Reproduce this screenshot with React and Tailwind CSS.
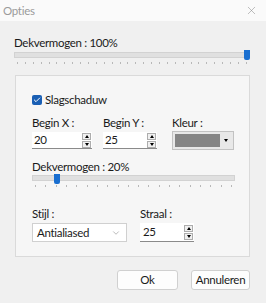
import { Check, ChevronDown, X } from "lucide-react";

function Spin() {
  return (
    <div className="flex flex-col gap-[1px]">
      <div className="w-[9px] h-[7px] border border-[#adadad] bg-[#f0f0f0] flex items-center justify-center">
        <div className="w-0 h-0 border-l-[2.5px] border-r-[2.5px] border-b-[3px] border-l-transparent border-r-transparent border-b-black" />
      </div>
      <div className="w-[9px] h-[7px] border border-[#adadad] bg-[#f0f0f0] flex items-center justify-center">
        <div className="w-0 h-0 border-l-[2.5px] border-r-[2.5px] border-t-[3px] border-l-transparent border-r-transparent border-t-black" />
      </div>
    </div>
  );
}

function NumField({ value, width }) {
  return (
    <div className={`flex items-center justify-between bg-white border-b border-[#8a8a8a] h-[17px] pl-[2px] pr-[1px] ${width}`}>
      <span>{value}</span>
      <Spin />
    </div>
  );
}

function Ticks({ count }) {
  const ticks = [];
  for (let i = 0; i < count; i++) ticks.push(i);
  return (
    <div className="flex justify-between px-[3px] mt-[4px]">
      {ticks.map((t) => (
        <div key={t} className="w-px h-[2px] bg-[#b8b8b8]" />
      ))}
    </div>
  );
}

export default function App() {
  return (
    <div
      className="w-[266px] h-[303px] bg-[#f0f0f0] text-[11.5px] tracking-[-0.3px] text-[#1a1a1a] flex flex-col"
      style={{ fontFamily: "Lato, 'Noto Sans', sans-serif" }}
    >
      <div className="h-[21px] bg-[#fafafa] flex items-center justify-between pl-[3px] pr-[8px]">
        <span className="text-[#9a9a9a]">Opties</span>
        <X size={13} strokeWidth={1} className="text-[#8a8a8a]" />
      </div>

      <div className="pl-[14px] pr-[16px] pt-[15px] flex flex-col flex-1">
        <div className="leading-[14px]">Dekvermogen : 100%</div>
        <div className="relative mt-[1px]">
          <div className="h-[6px] bg-[#e0e0e0] border border-[#d2d2d2] mt-[1px]" />
          <div className="absolute right-0 top-[-1px] w-[6px] h-[10px] bg-[#1a6fd0] rounded-b-[2px]" />
        </div>
        <Ticks count={30} />

        <div className="mt-[11px] border border-[#dadada] bg-[#f6f6f6] ml-[1px] h-[182px] pl-[16px] pr-[14px] pt-[19px]">
          <div className="flex items-center gap-[3px] h-[10px]">
            <div className="w-[10px] h-[10px] bg-[#1a5fb4] rounded-[2px] flex items-center justify-center">
              <Check size={8} strokeWidth={3} className="text-white" />
            </div>
            <span>Slagschaduw</span>
          </div>

          <div className="flex mt-[11px] gap-[11px]">
            <div className="flex flex-col">
              <span className="leading-[14px]">Begin X :</span>
              <div className="mt-[2px]">
                <NumField value="20" width="w-[60px]" />
              </div>
            </div>
            <div className="flex flex-col">
              <span className="leading-[14px]">Begin Y :</span>
              <div className="mt-[2px]">
                <NumField value="25" width="w-[54px]" />
              </div>
            </div>
            <div className="flex flex-col ml-[4px]">
              <span className="leading-[14px]">Kleur :</span>
              <div className="mt-[1px] w-[62px] h-[19px] border border-[#c2c2c2] bg-[#e8e8e8] p-[2px] flex">
                <div className="flex-1 bg-[#858585]" />
                <div className="w-[11px] flex items-center justify-center">
                  <div className="w-0 h-0 border-l-[2.5px] border-r-[2.5px] border-t-[3px] border-l-transparent border-r-transparent border-t-black" />
                </div>
              </div>
            </div>
          </div>

          <div className="mt-[10px] leading-[14px]">Dekvermogen : 20%</div>
          <div className="relative mt-[1px]">
            <div className="h-[6px] bg-[#e0e0e0] border border-[#d2d2d2] mt-[1px]" />
            <div className="absolute left-[22px] top-[-1px] w-[6px] h-[10px] bg-[#1a6fd0] rounded-b-[2px]" />
          </div>
          <Ticks count={20} />

          <div className="flex mt-[20px] gap-[13px]">
            <div className="flex flex-col">
              <span className="leading-[14px]">Stijl :</span>
              <div className="mt-[2px] w-[95px] h-[19px] bg-white border border-[#d0d0d0] flex items-center justify-between pl-[4px] pr-[5px]">
                <span>Antialiased</span>
                <ChevronDown size={10} strokeWidth={1.2} className="text-[#777]" />
              </div>
            </div>
            <div className="flex flex-col">
              <span className="leading-[14px]">Straal :</span>
              <div className="mt-[2px]">
                <div className="flex items-center justify-between bg-white border-b border-[#8a8a8a] h-[19px] w-[54px] pl-[3px] pr-[1px]">
                  <span>25</span>
                  <Spin />
                </div>
              </div>
            </div>
          </div>
        </div>

        <div className="flex justify-end gap-[13px] mt-[13px]">
          <button className="w-[61px] h-[20px] bg-[#fdfdfd] border border-[#d0d0d0] rounded-[3px]">
            Ok
          </button>
          <button className="w-[59px] h-[20px] bg-[#fdfdfd] border border-[#d0d0d0] rounded-[3px]">
            Annuleren
          </button>
        </div>
      </div>
    </div>
  );
}
